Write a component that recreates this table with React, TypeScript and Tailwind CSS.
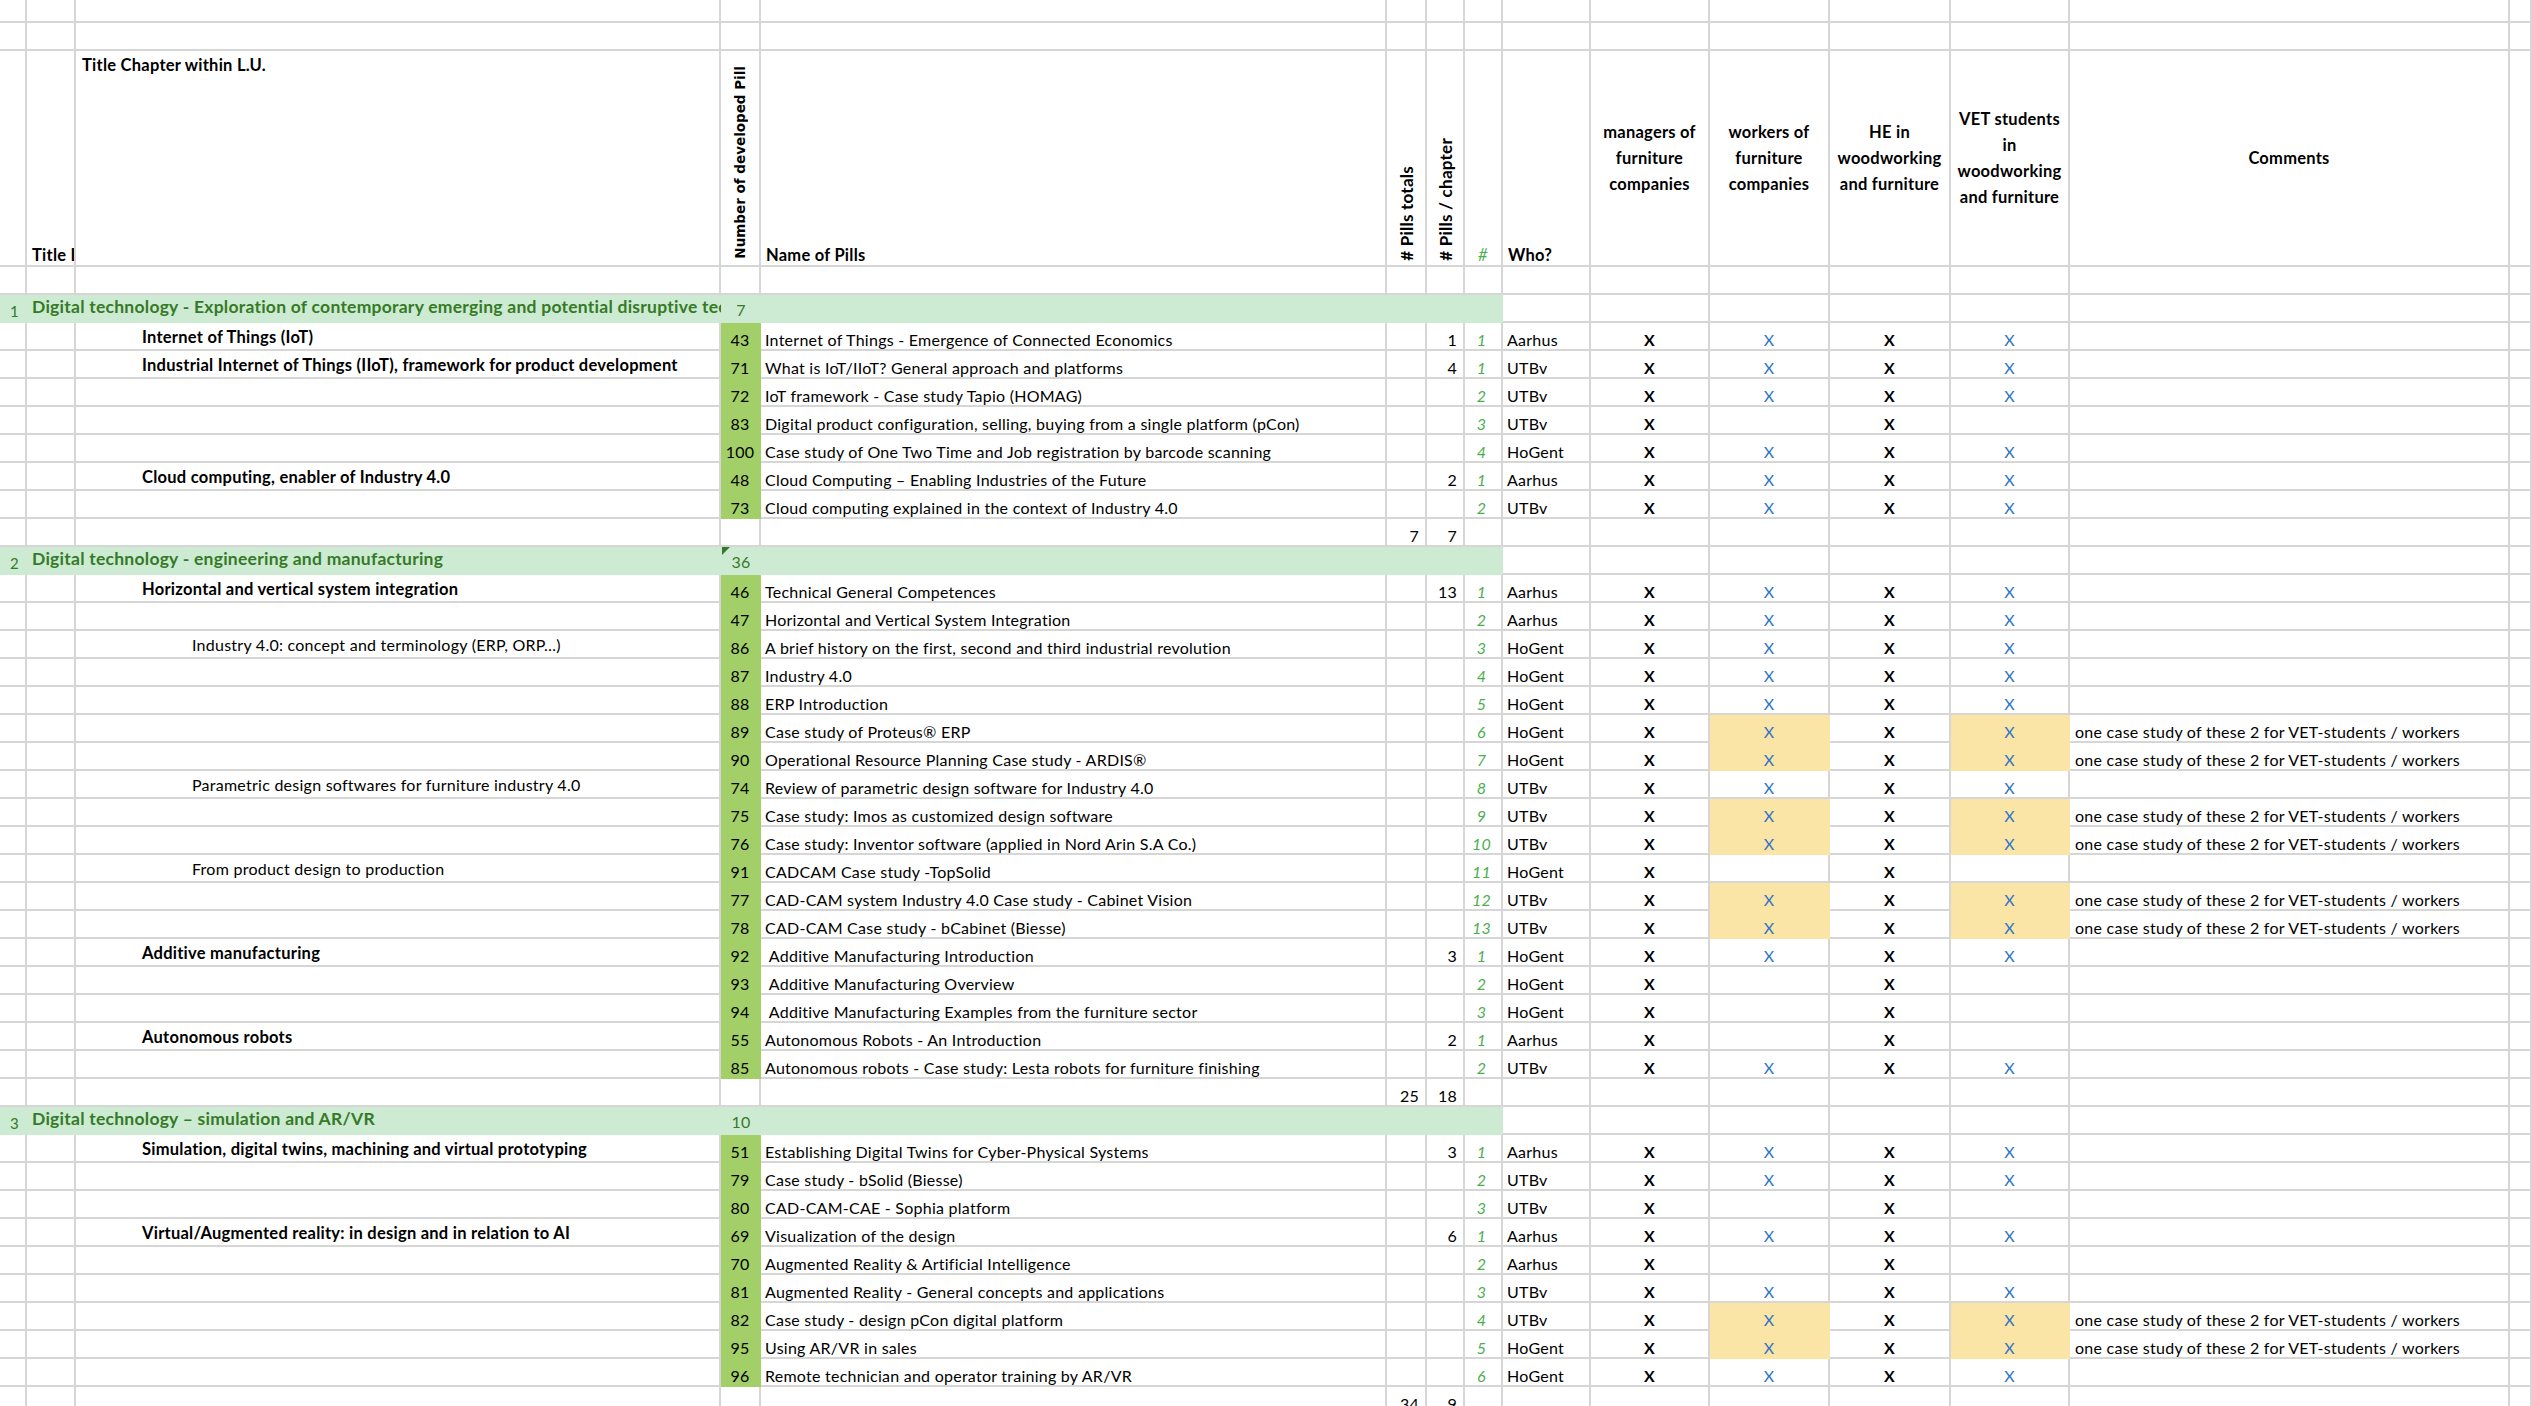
import React from "react";

type Green = { kind: "green"; lu: number; title: string; n: number; tri?: boolean };
type Pill = {
  kind: "pill";
  ch?: string;
  sub?: string;
  id: number;
  name: string;
  g?: number;
  h: number;
  who: string;
  blue?: boolean;
  yellow?: boolean;
};
type Total = { kind: "total"; f: number; g: number };
type Row = Green | Pill | Total;

const W = {
  a: "w-[27px]",
  b: "w-[49px]",
  c: "w-[645px]",
  d: "w-[40px]",
  e: "w-[626px]",
  f: "w-[40px]",
  g: "w-[38px]",
  h: "w-[38px]",
  i: "w-[88px]",
  j: "w-[119px]",
  k: "w-[120px]",
  l: "w-[121px]",
  m: "w-[119px]",
  n: "w-[440px]",
  o: "w-[22px]",
};

const GRID = "border-[#d6d6d6]";
const PILL = "bg-[#a3cf69] border-[#a3cf69]";
const YELLOW = "bg-[#fbe5a6] border-[#fbe5a6]";
const NOTE = "one case study of these 2 for VET-students / workers";

const rows: Row[] = [
  { kind: "green", lu: 1, title: "Digital technology - Exploration of contemporary emerging and potential disruptive technologies", n: 7 },
  { kind: "pill", ch: "Internet of Things (IoT)", id: 43, name: "Internet of Things - Emergence of Connected Economics", g: 1, h: 1, who: "Aarhus", blue: true },
  { kind: "pill", ch: "Industrial Internet of Things (IIoT), framework for product development", id: 71, name: "What is IoT/IIoT? General approach and platforms", g: 4, h: 1, who: "UTBv", blue: true },
  { kind: "pill", id: 72, name: "IoT framework - Case study Tapio (HOMAG)", h: 2, who: "UTBv", blue: true },
  { kind: "pill", id: 83, name: "Digital product configuration, selling, buying from a single platform (pCon)", h: 3, who: "UTBv" },
  { kind: "pill", id: 100, name: "Case study of One Two Time and Job registration by barcode scanning", h: 4, who: "HoGent", blue: true },
  { kind: "pill", ch: "Cloud computing, enabler of Industry 4.0", id: 48, name: "Cloud Computing – Enabling Industries of the Future", g: 2, h: 1, who: "Aarhus", blue: true },
  { kind: "pill", id: 73, name: "Cloud computing explained in the context of Industry 4.0", h: 2, who: "UTBv", blue: true },
  { kind: "total", f: 7, g: 7 },
  { kind: "green", lu: 2, title: "Digital technology - engineering and manufacturing", n: 36, tri: true },
  { kind: "pill", ch: "Horizontal and vertical system integration", id: 46, name: "Technical General Competences", g: 13, h: 1, who: "Aarhus", blue: true },
  { kind: "pill", id: 47, name: "Horizontal and Vertical System Integration", h: 2, who: "Aarhus", blue: true },
  { kind: "pill", sub: "Industry 4.0: concept and terminology (ERP, ORP…)", id: 86, name: "A brief history on the first, second and third industrial revolution", h: 3, who: "HoGent", blue: true },
  { kind: "pill", id: 87, name: "Industry 4.0", h: 4, who: "HoGent", blue: true },
  { kind: "pill", id: 88, name: "ERP Introduction", h: 5, who: "HoGent", blue: true },
  { kind: "pill", id: 89, name: "Case study of Proteus® ERP", h: 6, who: "HoGent", blue: true, yellow: true },
  { kind: "pill", id: 90, name: "Operational Resource Planning Case study - ARDIS®", h: 7, who: "HoGent", blue: true, yellow: true },
  { kind: "pill", sub: "Parametric design softwares for furniture industry 4.0", id: 74, name: "Review of parametric design software for Industry 4.0", h: 8, who: "UTBv", blue: true },
  { kind: "pill", id: 75, name: "Case study: Imos as customized design software", h: 9, who: "UTBv", blue: true, yellow: true },
  { kind: "pill", id: 76, name: "Case study: Inventor software (applied in Nord Arin S.A Co.)", h: 10, who: "UTBv", blue: true, yellow: true },
  { kind: "pill", sub: "From product design to production", id: 91, name: "CADCAM Case study -TopSolid", h: 11, who: "HoGent" },
  { kind: "pill", id: 77, name: "CAD-CAM system Industry 4.0 Case study - Cabinet Vision", h: 12, who: "UTBv", blue: true, yellow: true },
  { kind: "pill", id: 78, name: "CAD-CAM Case study - bCabinet (Biesse)", h: 13, who: "UTBv", blue: true, yellow: true },
  { kind: "pill", ch: "Additive manufacturing", id: 92, name: " Additive Manufacturing Introduction", g: 3, h: 1, who: "HoGent", blue: true },
  { kind: "pill", id: 93, name: " Additive Manufacturing Overview", h: 2, who: "HoGent" },
  { kind: "pill", id: 94, name: " Additive Manufacturing Examples from the furniture sector", h: 3, who: "HoGent" },
  { kind: "pill", ch: "Autonomous robots", id: 55, name: "Autonomous Robots - An Introduction", g: 2, h: 1, who: "Aarhus" },
  { kind: "pill", id: 85, name: "Autonomous robots - Case study: Lesta robots for furniture finishing", h: 2, who: "UTBv", blue: true },
  { kind: "total", f: 25, g: 18 },
  { kind: "green", lu: 3, title: "Digital technology – simulation and AR/VR", n: 10 },
  { kind: "pill", ch: "Simulation, digital twins, machining and virtual prototyping", id: 51, name: "Establishing Digital Twins for Cyber-Physical Systems", g: 3, h: 1, who: "Aarhus", blue: true },
  { kind: "pill", id: 79, name: "Case study - bSolid (Biesse)", h: 2, who: "UTBv", blue: true },
  { kind: "pill", id: 80, name: "CAD-CAM-CAE - Sophia platform", h: 3, who: "UTBv" },
  { kind: "pill", ch: "Virtual/Augmented reality: in design and in relation to AI", id: 69, name: "Visualization of the design", g: 6, h: 1, who: "Aarhus", blue: true },
  { kind: "pill", id: 70, name: "Augmented Reality & Artificial Intelligence", h: 2, who: "Aarhus" },
  { kind: "pill", id: 81, name: "Augmented Reality - General concepts and applications", h: 3, who: "UTBv", blue: true },
  { kind: "pill", id: 82, name: "Case study - design pCon digital platform", h: 4, who: "UTBv", blue: true, yellow: true },
  { kind: "pill", id: 95, name: "Using AR/VR in sales", h: 5, who: "HoGent", blue: true, yellow: true },
  { kind: "pill", id: 96, name: "Remote technician and operator training by AR/VR", h: 6, who: "HoGent", blue: true },
  { kind: "total", f: 34, g: 9 },
  { kind: "total", f: 0, g: 0 },
];

function Cell({
  w,
  fill = GRID,
  className = "",
  children,
}: {
  w: string;
  fill?: string;
  className?: string;
  children?: React.ReactNode;
}) {
  return (
    <div
      className={`${w} ${fill} ${className} relative h-full shrink-0 border-r-2 border-b-2 flex overflow-hidden whitespace-nowrap`}
    >
      {children}
    </div>
  );
}

function Tail({ from }: { from: "i" | "j" }) {
  return (
    <>
      {from === "i" && <Cell w={W.i} />}
      <Cell w={W.j} />
      <Cell w={W.k} />
      <Cell w={W.l} />
      <Cell w={W.m} />
      <Cell w={W.n} />
      <Cell w={W.o} />
    </>
  );
}

function EmptyRow({ h }: { h: string }) {
  return (
    <div className={`flex ${h}`}>
      <Cell w={W.a} />
      <Cell w={W.b} />
      <Cell w={W.c} />
      <Cell w={W.d} />
      <Cell w={W.e} />
      <Cell w={W.f} />
      <Cell w={W.g} />
      <Cell w={W.h} />
      <Tail from="i" />
    </div>
  );
}

function Header() {
  return (
    <div className="flex h-[216px] font-bold text-[16.5px]">
      <Cell w={W.a} />
      <Cell w={W.b} className="items-end pl-[5px] pb-[1px]">
        Title L.U.
      </Cell>
      <Cell w={W.c} className="items-start pl-[6px] pt-[5px]">
        Title Chapter within L.U.
      </Cell>
      <Cell w={W.d} className="items-end justify-center pb-[6px]">
        <span className="[writing-mode:vertical-rl] rotate-180 font-['DejaVu_Sans',sans-serif] text-[13.5px] leading-[17px] tracking-normal">
          Number of developed Pill
        </span>
      </Cell>
      <Cell w={W.e} className="items-end pl-[5px] pb-[1px]">
        Name of Pills
      </Cell>
      <Cell w={W.f} className="items-end justify-center pb-[4px]">
        <span className="[writing-mode:vertical-rl] rotate-180 text-[17px] leading-[19px]">
          # Pills totals
        </span>
      </Cell>
      <Cell w={W.g} className="items-end justify-center pb-[4px]">
        <span className="[writing-mode:vertical-rl] rotate-180 text-[17px] leading-[19px]">
          # Pills / chapter
        </span>
      </Cell>
      <Cell w={W.h} className="items-end justify-center pb-[1px] font-normal italic text-[#4caf50]">
        #
      </Cell>
      <Cell w={W.i} className="items-end pl-[5px] pb-[1px]">
        Who?
      </Cell>
      <Cell w={W.j} className="items-center justify-center text-center whitespace-normal leading-[26px]">
        managers of
        <br />
        furniture
        <br />
        companies
      </Cell>
      <Cell w={W.k} className="items-center justify-center text-center whitespace-normal leading-[26px]">
        workers of
        <br />
        furniture
        <br />
        companies
      </Cell>
      <Cell w={W.l} className="items-center justify-center text-center whitespace-normal leading-[26px]">
        HE in
        <br />
        woodworking
        <br />
        and furniture
      </Cell>
      <Cell w={W.m} className="items-center justify-center text-center whitespace-normal leading-[26px]">
        VET students
        <br />
        in
        <br />
        woodworking
        <br />
        and furniture
      </Cell>
      <Cell w={W.n} className="items-center justify-center">
        Comments
      </Cell>
      <Cell w={W.o} />
    </div>
  );
}

function GreenRow({ r }: { r: Green }) {
  return (
    <div className="flex h-[30px] -mt-[2px]">
      <div className="flex w-[1503px] shrink-0 bg-[#cdebd3] text-[#357a26]">
        <div className="w-[27px] shrink-0 flex items-end justify-center pb-[3px] pl-[2px] text-[15px]">
          {r.lu}
        </div>
        <div className="w-[694px] shrink-0 flex items-end pl-[5px] pb-[6px] overflow-hidden whitespace-nowrap font-bold text-[17.5px] leading-[21px]">
          {r.title}
        </div>
        <div className="relative w-[40px] shrink-0 flex items-end justify-center pb-[4px]">
          {r.tri && (
            <span className="absolute left-[1px] top-[2px] w-0 h-0 border-t-[8px] border-r-[8px] border-t-[#357a26] border-r-transparent" />
          )}
          {r.n}
        </div>
      </div>
      <div className="flex h-full pt-[2px]">
        <Tail from="i" />
      </div>
    </div>
  );
}

function TotalRow({ r }: { r: Total }) {
  return (
    <div className="flex h-[28px]">
      <Cell w={W.a} />
      <Cell w={W.b} />
      <Cell w={W.c} />
      <Cell w={W.d} />
      <Cell w={W.e} />
      <Cell w={W.f} className="items-end justify-end pr-[6px]">
        {r.f ? r.f : ""}
      </Cell>
      <Cell w={W.g} className="items-end justify-end pr-[6px]">
        {r.g ? r.g : ""}
      </Cell>
      <Cell w={W.h} />
      <Tail from="i" />
    </div>
  );
}

function PillRow({ r }: { r: Pill }) {
  return (
    <div className="flex h-[28px]">
      <Cell w={W.a} />
      <Cell w={W.b} />
      <Cell w={W.c} className="items-end pb-[3px]">
        {r.ch && <span className="pl-[66px] font-bold text-[16.5px]">{r.ch}</span>}
        {r.sub && <span className="pl-[116px]">{r.sub}</span>}
      </Cell>
      <Cell w={W.d} fill={PILL} className="items-end justify-center">
        {r.id}
      </Cell>
      <Cell w={W.e} className="items-end pl-[4px] whitespace-pre">
        {r.name}
      </Cell>
      <Cell w={W.f} />
      <Cell w={W.g} className="items-end justify-end pr-[6px]">
        {r.g ?? ""}
      </Cell>
      <Cell w={W.h} className="items-end justify-center pr-[3px] italic text-[#4caf50]">
        {r.h}
      </Cell>
      <Cell w={W.i} className="items-end pl-[4px]">
        {r.who}
      </Cell>
      <Cell w={W.j} className="items-end justify-center font-bold">
        X
      </Cell>
      <Cell w={W.k} fill={r.yellow ? YELLOW : GRID} className="items-end justify-center text-[#2e74c6]">
        {r.blue ? "X" : ""}
      </Cell>
      <Cell w={W.l} className="items-end justify-center font-bold">
        X
      </Cell>
      <Cell w={W.m} fill={r.yellow ? YELLOW : GRID} className="items-end justify-center text-[#2e74c6]">
        {r.blue ? "X" : ""}
      </Cell>
      <Cell w={W.n} className="items-end pl-[5px]">
        {r.yellow ? NOTE : ""}
      </Cell>
      <Cell w={W.o} />
    </div>
  );
}

export default function App() {
  return (
    <div className="w-[2532px] h-[1406px] overflow-hidden bg-white text-black font-['Lato',sans-serif] text-[16px] leading-[18px] tracking-[0.25px]">
      <EmptyRow h="h-[23px]" />
      <EmptyRow h="h-[28px]" />
      <Header />
      <EmptyRow h="h-[28px]" />
      {rows.map((r, i) =>
        r.kind === "green" ? (
          <GreenRow key={i} r={r} />
        ) : r.kind === "total" ? (
          <TotalRow key={i} r={r} />
        ) : (
          <PillRow key={i} r={r} />
        )
      )}
    </div>
  );
}
